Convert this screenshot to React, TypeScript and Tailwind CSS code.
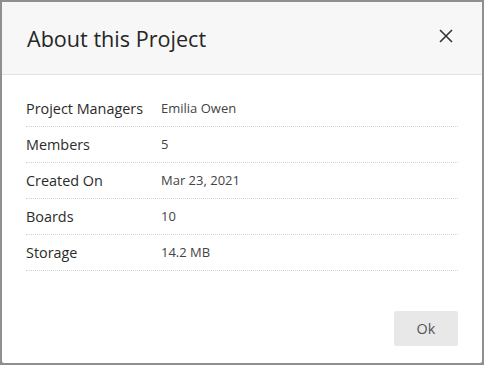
export default function App() {
  const rows = [
    { label: "Project Managers", value: "Emilia Owen" },
    { label: "Members", value: "5" },
    { label: "Created On", value: "Mar 23, 2021" },
    { label: "Boards", value: "10" },
    { label: "Storage", value: "14.2 MB" },
  ];

  return (
    <div
      className="w-[484px] h-[365px] bg-[#8f8f8f] p-[2px] pr-[2px]"
      style={{ fontFamily: '"Open Sans", sans-serif' }}
    >
      <div className="h-full bg-white rounded-[2px] flex flex-col">
        {/* Header */}
        <div className="h-[73px] bg-[#f7f7f7] border-b border-[#e2e2e2] flex items-center justify-between pl-[25px] pr-[28px] shrink-0">
          <h1 className="text-[21.6px] text-[#262626] leading-none mt-[1px]">About this Project</h1>
          <button className="text-[#333] mt-[-4px]">
            <svg width="16" height="16" viewBox="0 0 16 16" fill="none" stroke="currentColor" strokeWidth="1.6">
              <path d="M2 2L14 14M14 2L2 14" />
            </svg>
          </button>
        </div>

        {/* Body */}
        <div className="px-[24px] pt-[16px] flex-1">
          {rows.map((r) => (
            <div
              key={r.label}
              className="h-[36px] flex items-center border-b border-dotted border-[#d4d4d4]"
            >
              <div className="w-[135px] text-[14.4px] text-[#2b2b2b]">{r.label}</div>
              <div className="text-[13px] text-[#444]">{r.value}</div>
            </div>
          ))}
        </div>

        {/* Footer */}
        <div className="flex justify-end pr-[24px] pb-[17px]">
          <button className="w-[64px] h-[35px] bg-[#e8e8e8] rounded-[2px] text-[14.4px] text-[#555]">
            Ok
          </button>
        </div>
      </div>
    </div>
  );
}
